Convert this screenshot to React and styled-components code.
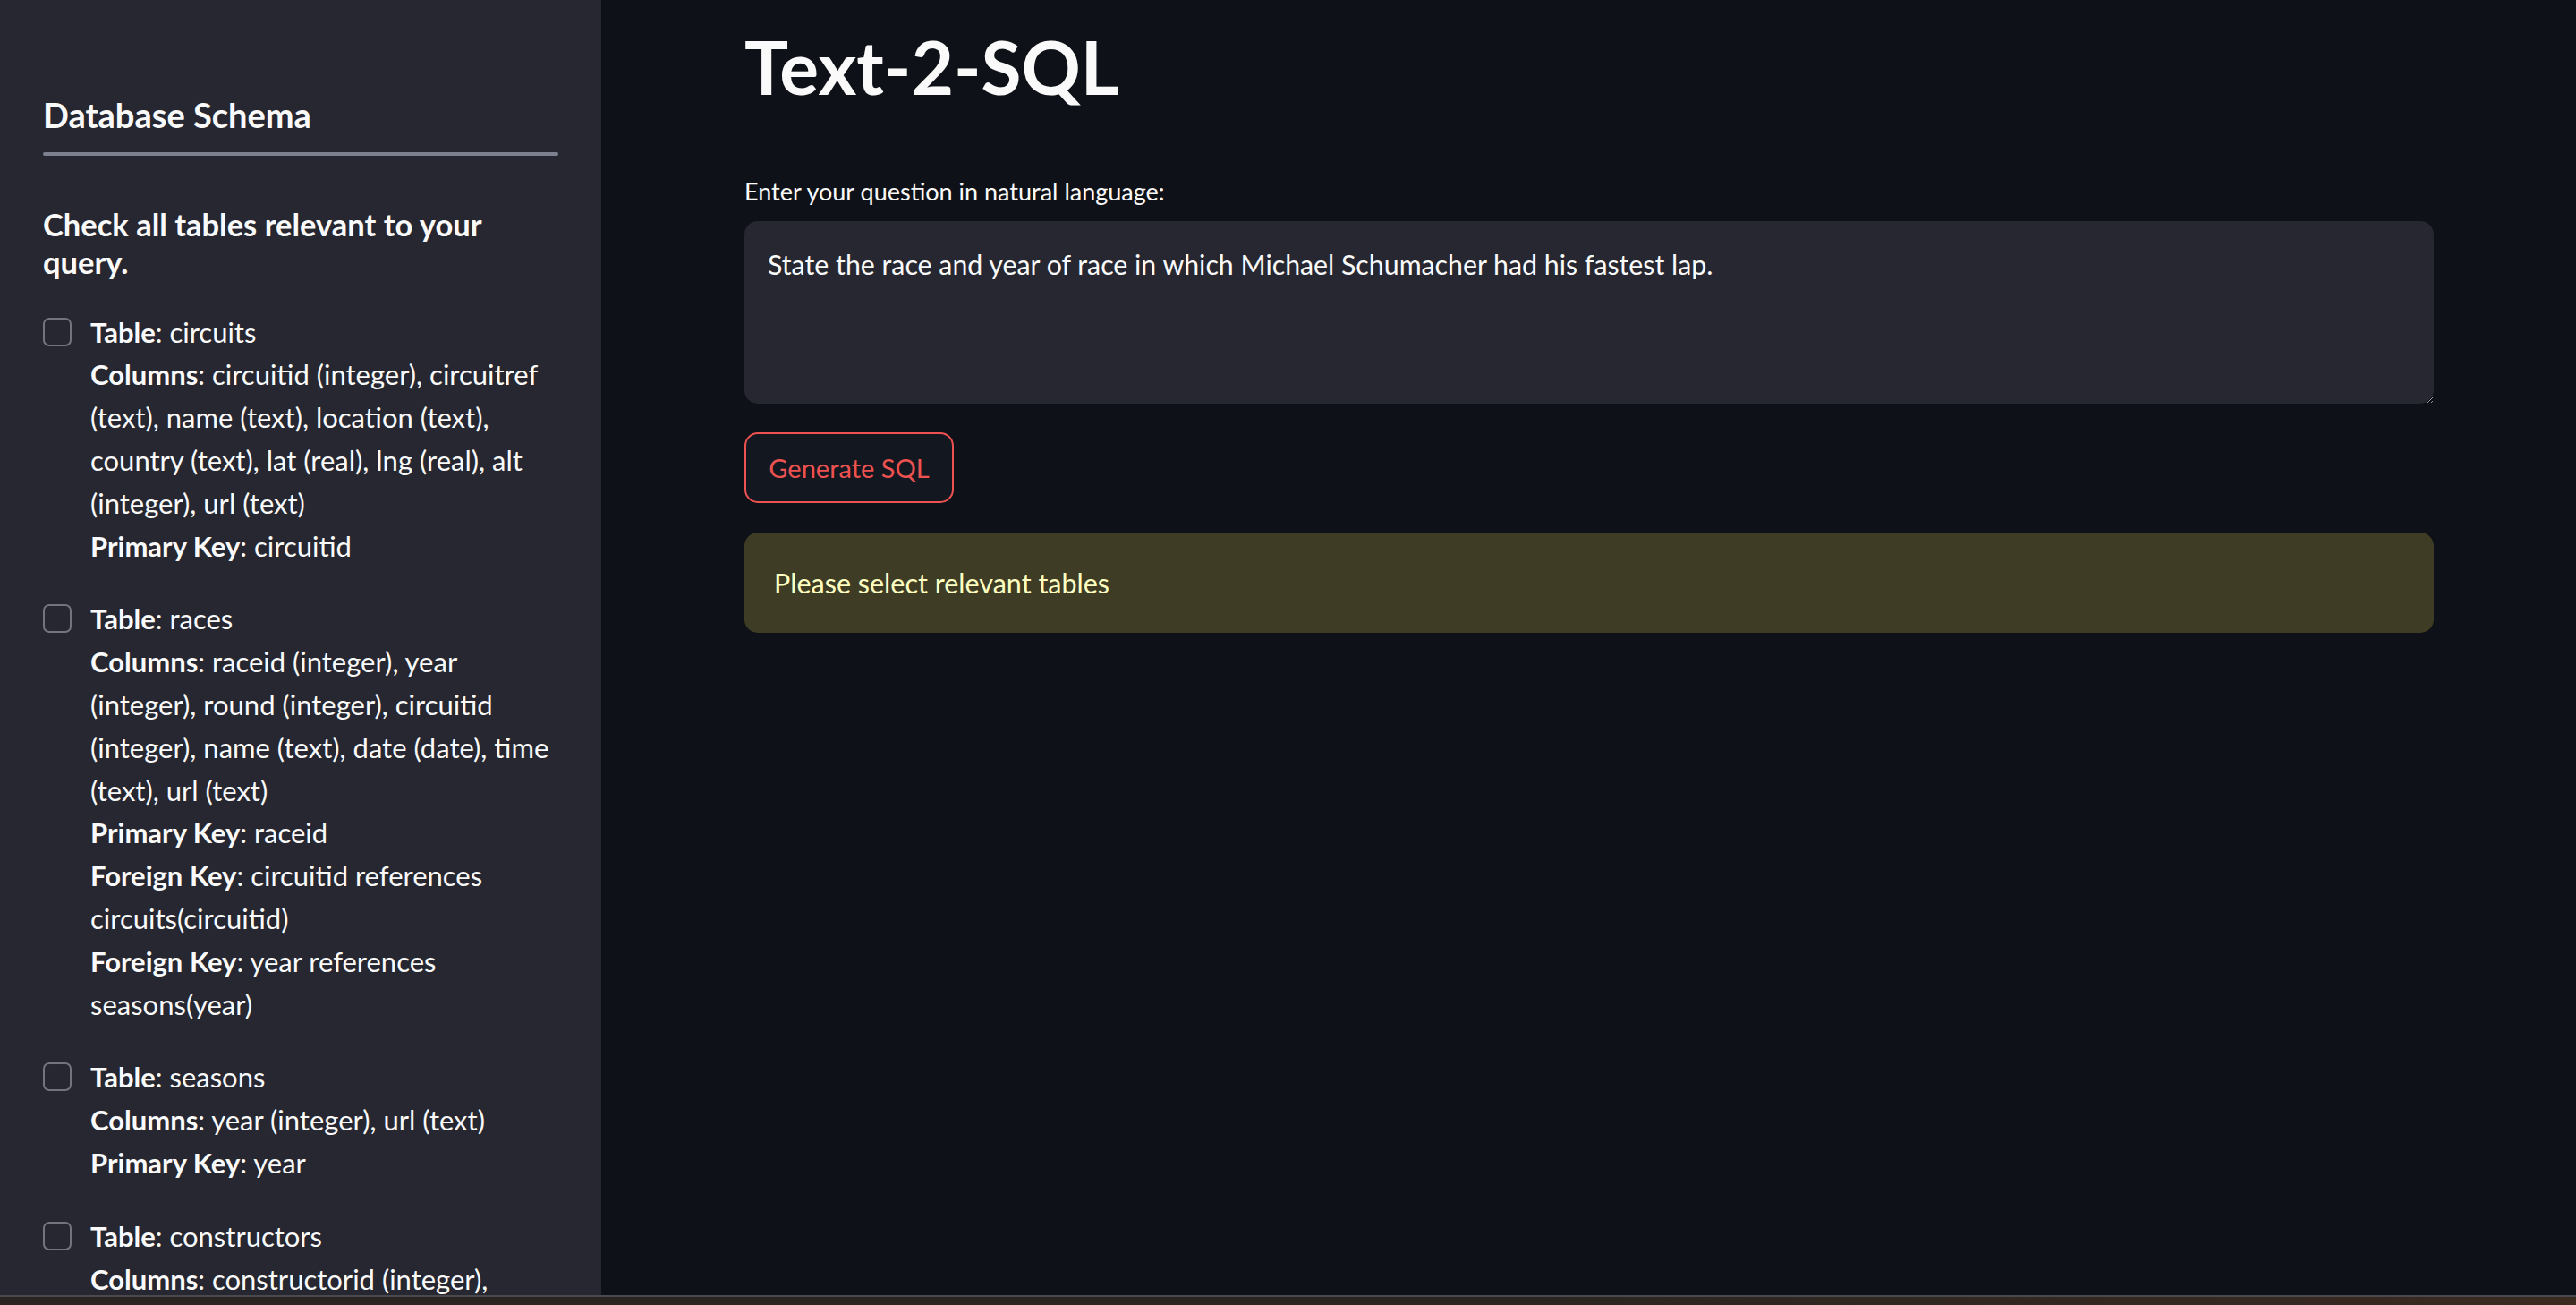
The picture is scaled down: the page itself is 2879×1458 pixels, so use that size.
import styled, { createGlobalStyle } from 'styled-components';

const GlobalStyle = createGlobalStyle`
    html, body {
        margin: 0;
        padding: 0;
        background: #0e1117;
    }
    * {
        box-sizing: border-box;
    }
`

const Screen = styled.div`
    width: 2879px;
    height: 1458px;
    display: flex;
    flex-direction: column;
    overflow: hidden;
    font-family: Lato, "Noto Sans", sans-serif;
    color: #fafafa;
`

const Page = styled.div`
    flex: 1;
    display: flex;
    min-height: 0;
`

const Sidebar = styled.aside`
    width: 672px;
    flex-shrink: 0;
    background: #262730;
    padding: 106px 48px 0 48px;
    overflow: hidden;
`

const SideTitle = styled.h2`
    margin: 0;
    font-size: 38px;
    line-height: 1.2;
    font-weight: 700;
`

const Divider = styled.hr`
    margin: 18px 0 0 0;
    border: none;
    height: 4px;
    border-radius: 2px;
    background: #7d808f;
`

const Hint = styled.h5`
    margin: 56px 0 33px 0;
    font-size: 34.5px;
    line-height: 42px;
    font-weight: 700;
`

const TableList = styled.div`
    display: flex;
    flex-direction: column;
    gap: 33px;
`

const TableItem = styled.label`
    display: flex;
    align-items: flex-start;
    gap: 21px;
`

const Box = styled.span`
    width: 32px;
    height: 32px;
    margin-top: 8px;
    flex-shrink: 0;
    border: 2px solid #72747f;
    border-radius: 7px;
    background: #262730;
`

const Details = styled.div`
    font-size: 31px;
    line-height: 47.8px;
    padding-top: 1px;
    white-space: nowrap;
`

const Line = styled.div`
    b {
        font-weight: 700;
    }
`

const Main = styled.main`
    flex: 1;
    padding: 25px 159px 0 160px;
    display: flex;
    flex-direction: column;
`

const Title = styled.h1`
    margin: 0;
    font-size: 82px;
    line-height: 1.2;
    font-weight: 700;
`

const FieldLabel = styled.div`
    margin-top: 71px;
    font-size: 27px;
    line-height: 40px;
`

const Question = styled.textarea`
    margin-top: 13px;
    height: 204px;
    width: 100%;
    padding: 24px 26px;
    border: none;
    border-radius: 15px;
    background: #262730;
    color: #fafafa;
    font-family: inherit;
    font-size: 30.3px;
    line-height: 48px;
    outline: none;
    resize: vertical;
`

const Button = styled.button`
    margin-top: 32px;
    align-self: flex-start;
    width: 234px;
    height: 79px;
    border: 2px solid #ee5250;
    border-radius: 15px;
    background: #131720;
    color: #ee5250;
    font-family: inherit;
    font-size: 29px;
`

const Warning = styled.div`
    margin-top: 33px;
    height: 112px;
    display: flex;
    align-items: center;
    padding: 0 33px;
    border-radius: 15px;
    background: #3e3c24;
    color: #ffffc2;
    font-size: 30.5px;
`

const Taskbar = styled.div`
    height: 11px;
    flex-shrink: 0;
    border-top: 2px solid #4a494e;
    background: linear-gradient(90deg, #2a2522 0%, #2b2521 60%, #3a2a20 100%);
`

const tables = [
    {
        name: 'circuits',
        rows: [
            ['Columns', ['circuitid (integer), circuitref', '(text), name (text), location (text),', 'country (text), lat (real), lng (real), alt', '(integer), url (text)']],
            ['Primary Key', ['circuitid']],
        ],
    },
    {
        name: 'races',
        rows: [
            ['Columns', ['raceid (integer), year', '(integer), round (integer), circuitid', '(integer), name (text), date (date), time', '(text), url (text)']],
            ['Primary Key', ['raceid']],
            ['Foreign Key', ['circuitid references', 'circuits(circuitid)']],
            ['Foreign Key', ['year references', 'seasons(year)']],
        ],
    },
    {
        name: 'seasons',
        rows: [
            ['Columns', ['year (integer), url (text)']],
            ['Primary Key', ['year']],
        ],
    },
    {
        name: 'constructors',
        rows: [
            ['Columns', ['constructorid (integer),']],
        ],
    },
]

const TableEntry = ({ table }) => (
    <TableItem>
        <Box />
        <Details>
            <Line><b>Table</b>: {table.name}</Line>
            {table.rows.map(([key, lines], i) =>
                lines.map((text, j) => (
                    <Line key={i + '-' + j}>
                        {j === 0 && <><b>{key}</b>: </>}
                        {text}
                    </Line>
                ))
            )}
        </Details>
    </TableItem>
)

const App = () => {
    return (
        <>
            <GlobalStyle />
            <Screen>
                <Page>
                    <Sidebar>
                        <SideTitle>Database Schema</SideTitle>
                        <Divider />
                        <Hint>Check all tables relevant to your<br />query.</Hint>
                        <TableList>
                            {tables.map(t => <TableEntry key={t.name} table={t} />)}
                        </TableList>
                    </Sidebar>
                    <Main>
                        <Title>Text-2-SQL</Title>
                        <FieldLabel>Enter your question in natural language:</FieldLabel>
                        <Question defaultValue="State the race and year of race in which Michael Schumacher had his fastest lap." />
                        <Button>Generate SQL</Button>
                        <Warning>Please select relevant tables</Warning>
                    </Main>
                </Page>
                <Taskbar />
            </Screen>
        </>
    )
}

export default App;
